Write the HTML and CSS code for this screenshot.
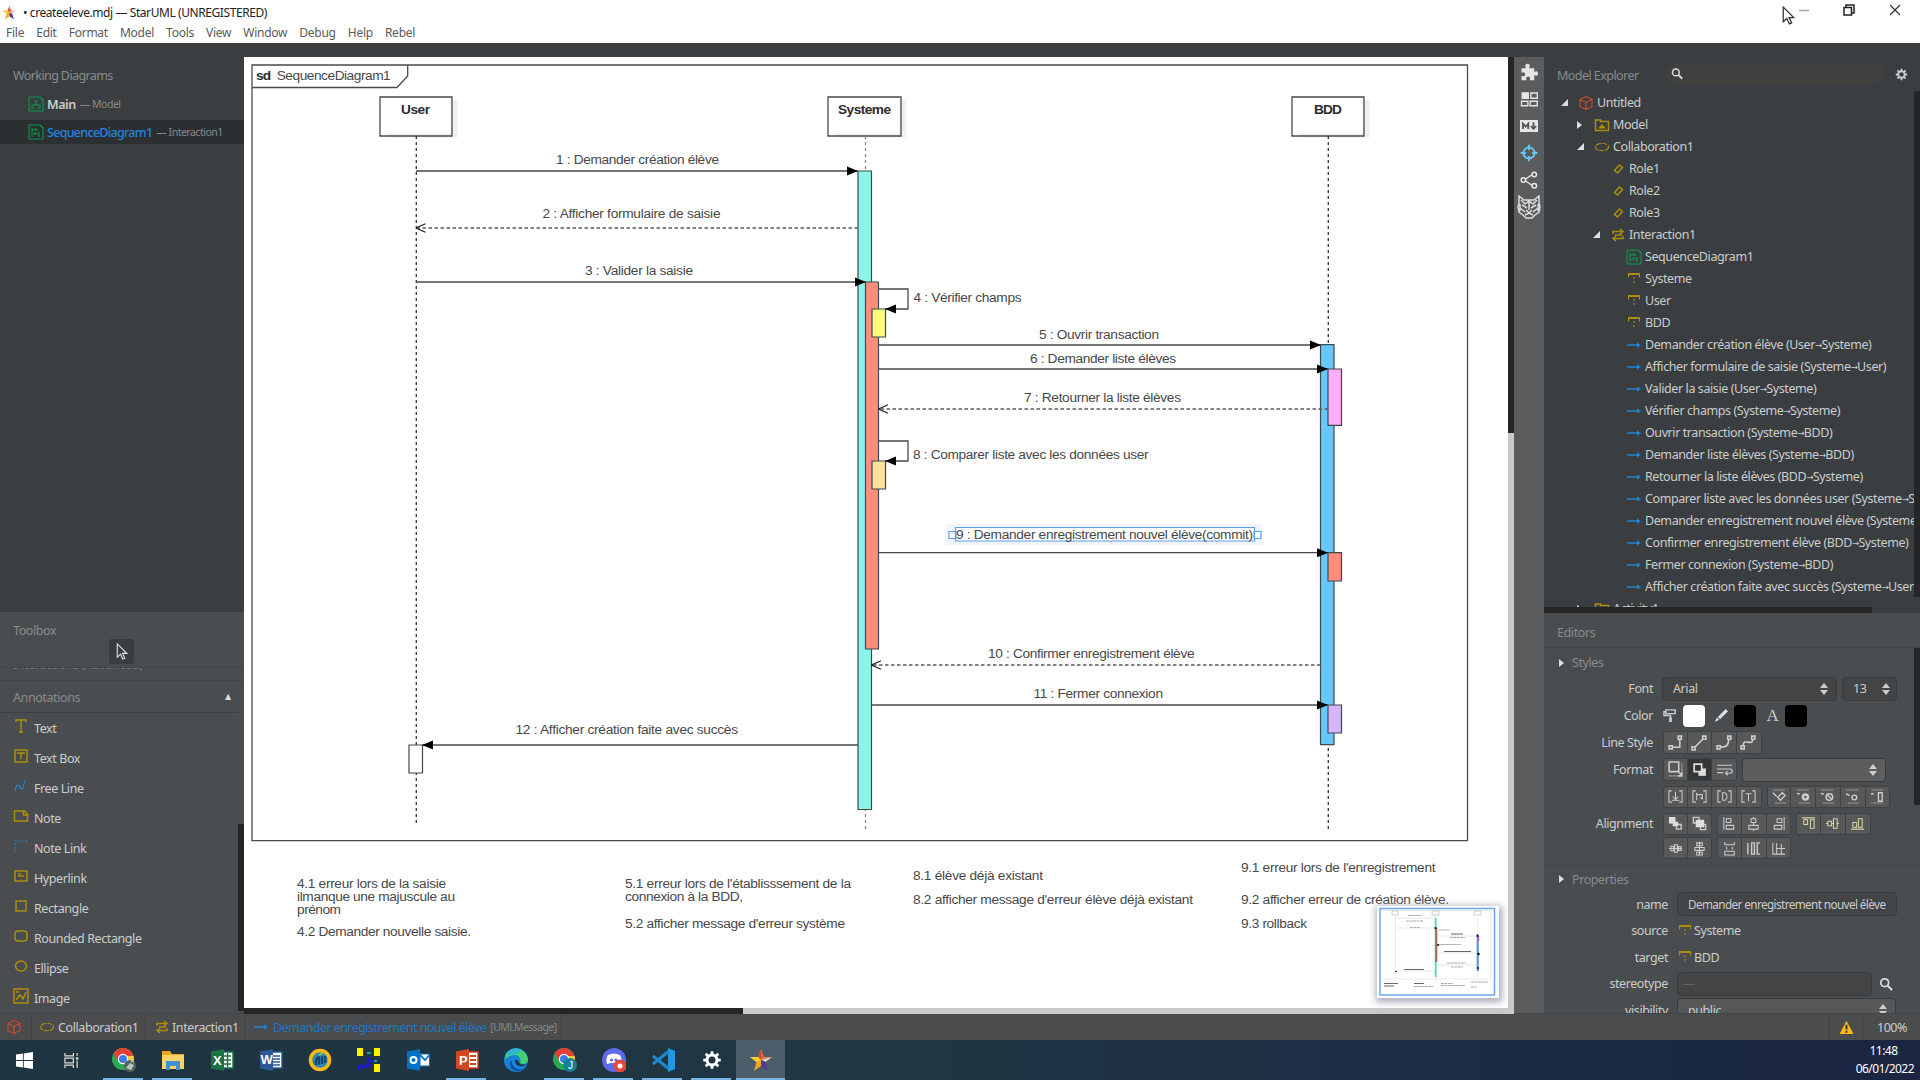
FILE: index.html
```html
<!DOCTYPE html>
<html lang="fr">
<head>
<meta charset="utf-8">
<title>createeleve.mdj — StarUML (UNREGISTERED)</title>
<link rel="stylesheet" href="styles.css">
</head>
<body>
<svg class="defs" aria-hidden="true">
  <symbol id="star" viewBox="0 0 24 24"><path fill="#f5a623" d="M12 1l-3 8H1l6.500 5L5 23l7-5z"/><path fill="#d8432e" d="M12 1v11l-3-3z"/><path fill="#f6d13a" d="M1 9h8l3 3-4.500 2z"/><path fill="#e0604a" d="M12 1l3 8-3 3z"/><path fill="#ee8a3a" d="M15 9h8l-11 3z"/><path fill="#ded6e6" d="M23 9l-6.500 5L12 12z"/><path fill="#5a3a8c" d="M12 12l4.500 2L19 23l-7-5z"/></symbol>
  <symbol id="cube" viewBox="0 0 16 16"><path class="ln" d="M8 1.500l6 3v7l-6 3-6-3v-7zM2 4.500l6 3 6-3M8 7.500v7"/></symbol>
  <symbol id="diagram" viewBox="0 0 16 16"><path class="ln" d="M1 1h11l3 3v11H1z"/><path class="ln" d="M4 11V9h8v2M8 9V6M3 12h3M10 12h3M6 5h4"/></symbol>
  <symbol id="seq" viewBox="0 0 16 16"><path class="ln" d="M1 1h11l3 3v11H1z"/><path class="ln" d="M4 4v9M4 6h5l-2-1.500M11 8v5M11 10H6l2-1.500"/></symbol>
  <symbol id="model" viewBox="0 0 16 16"><path class="ln w" d="M1.500 3h5v1.500h8v9h-13z"/><path d="M4 11.500L8 7l4 4.500z" fill="currentColor"/></symbol>
  <symbol id="collab" viewBox="0 0 16 16"><ellipse class="ln" cx="8" cy="8" rx="6.500" ry="3.700" stroke-dasharray="5 1"/></symbol>
  <symbol id="role" viewBox="0 0 16 16"><path class="ln w" d="M9.500 4l3 2.500-5 5.500-3-2.500z"/></symbol>
  <symbol id="inter" viewBox="0 0 16 16"><path class="ln w" d="M3 7V4.500h9M10 2l3 2.500L10 7M13 9v2.500H4M6 9l-3 2.500L6 14M5 8h7"/></symbol>
  <symbol id="life" viewBox="0 0 16 16"><path class="ln" d="M2.500 6.500V2.500h11v4M2.500 3.500h11"/><path class="ln" d="M8 6v8" stroke-dasharray="2 2"/></symbol>
  <symbol id="arr" viewBox="0 0 16 16"><path class="ln w" d="M1 8h12"/><path d="M11 5.500L15 8l-4 2.500z" fill="currentColor"/></symbol>
  <symbol id="mag" viewBox="0 0 16 16"><circle cx="6.500" cy="6.500" r="4.500" fill="none" stroke="currentColor" stroke-width="2"/><path d="M10 10l5 5" stroke="currentColor" stroke-width="2.400"/></symbol>
  <symbol id="gear" viewBox="0 0 16 16"><circle cx="8" cy="8" r="4" fill="none" stroke="currentColor" stroke-width="2.400"/><path d="M8 1v3M8 12v3M1 8h3M12 8h3M3 3l2 2M11 11l2 2M13 3l-2 2M5 11l-2 2" stroke="currentColor" stroke-width="2.200"/></symbol>
  <symbol id="ud" viewBox="0 0 8 12"><path d="M4 0l4 5H0zM4 12l4-5H0z" fill="currentColor"/></symbol>
  <symbol id="cursor" viewBox="0 0 12 18"><path d="M1 1v14l3.400-3.200L6.800 17l2.200-1-2.400-5H11z" stroke-width="1.200"/></symbol>
  <marker id="solid" viewBox="0 0 11 10" refX="11" refY="5" markerWidth="11" markerHeight="10" markerUnits="userSpaceOnUse" orient="auto"><path d="M0 .5L11 5 0 9.500z"/></marker>
  <marker id="open" viewBox="0 0 11 10" refX="10.500" refY="5" markerWidth="11" markerHeight="10" markerUnits="userSpaceOnUse" orient="auto"><path d="M1 .7L10.500 5 1 9.300" fill="none" stroke="#222" stroke-width="1.200"/></marker>
</svg>

<header class="titlebar">
  <svg class="logo"><use href="#star"/></svg>
  <span class="title">• createeleve.mdj — StarUML (UNREGISTERED)</span>
  <svg class="winctl" viewBox="0 0 140 22"><path d="M19 10.500h10" stroke="#aaa" stroke-width="1.600"/><path d="M64 7.500h7.500V15H64zM66 7V5h8v8h-2" fill="none" stroke="#222" stroke-width="1.500"/><path d="M110 5l10 10M120 5l-10 10" stroke="#333" stroke-width="1.200"/></svg>
  <svg class="pointer" fill="#fff" stroke="#333"><use href="#cursor"/></svg>
</header>
<nav class="menubar"><span>File</span><span>Edit</span><span>Format</span><span>Model</span><span>Tools</span><span>View</span><span>Window</span><span>Debug</span><span>Help</span><span>Rebel</span></nav>

<main class="work">
  <aside class="left">
    <section class="diagrams">
      <h2>Working Diagrams</h2>
      <div class="wd"><svg class="ic green"><use href="#diagram"/></svg><b>Main</b><small>— Model</small></div>
      <div class="wd on"><svg class="ic green"><use href="#seq"/></svg><b>SequenceDiagram1</b><small>— Interaction1</small></div>
    </section>
    <section class="toolbox">
      <div class="tb-head"><h2>Toolbox</h2><div class="sel"><svg fill="none" stroke="#ddd"><use href="#cursor"/></svg></div></div>
      <div class="cut"><span>Interactions (Advanced)</span></div>
      <div class="group"><span>Annotations</span><i>▲</i></div>
      <ul class="tools">
        <li><svg class="ic gold" viewBox="0 0 16 16"><path class="ln w" d="M3 4V2h10v2M8 2v12M6 14h4"/></svg>Text</li>
        <li><svg class="ic gold" viewBox="0 0 16 16"><path class="ln w" d="M2 2h12v12H2zM5 6V5h6v1M8 5v6"/></svg>Text Box</li>
        <li><svg class="ic blue" viewBox="0 0 16 16"><path class="ln" d="M2 13c1-3 1-6 3-6s2 5 4 4 1-7 4-8"/></svg>Free Line</li>
        <li><svg class="ic gold" viewBox="0 0 16 16"><path class="ln w" d="M1.500 3h10l3 3v7h-13zM10.500 3v4h4"/></svg>Note</li>
        <li><svg class="ic blue" viewBox="0 0 16 16"><path class="ln" stroke-dasharray="2 1.500" d="M2 14V3h12"/></svg>Note Link</li>
        <li><svg class="ic gold" viewBox="0 0 16 16"><path class="ln w" d="M2 3h12v10H2zM5 8h6M5 6h3"/></svg>Hyperlink</li>
        <li><svg class="ic gold" viewBox="0 0 16 16"><path class="ln w" d="M3 3h10v10H3z"/></svg>Rectangle</li>
        <li><svg class="ic gold" viewBox="0 0 16 16"><rect class="ln w" x="2" y="3" width="12" height="10" rx="3"/></svg>Rounded Rectangle</li>
        <li><svg class="ic gold" viewBox="0 0 16 16"><ellipse class="ln w" cx="8" cy="8" rx="5.500" ry="5"/></svg>Ellipse</li>
        <li><svg class="ic gold" viewBox="0 0 16 16"><path class="ln w" d="M1 1h14v14H1zM3 12l4-5 3 4 3-7M3 4h3"/></svg>Image</li>
      </ul>
      <div class="thumb-l"></div>
    </section>
  </aside>

  <section class="canvas">
    <svg class="sheet" viewBox="244 57 1264 951">
      <g class="shape">
        <path d="M252 65H1467.500V840.700H252z"/>
        <path d="M252 87.500H397L407.700 76V65"/>
      </g>
      <g class="shadow"><path d="M387 136h69v-35h-4v34h-65zM835 136h70v-35h-4v34h-66zM1299 136h69v-35h-4v34h-65z"/></g>
      <g class="shape"><path d="M380 97h72v39h-72zM828 97h73v39h-73zM1292 97h72v39h-72z"/></g>
      <g class="lifeline"><path d="M416.300 136V823"/><path class="dim" d="M865.500 136V830"/><path d="M1328.300 136V830"/></g>
      <g class="exec">
        <path fill="#8df4ea" d="M858 171h13.500v638.500H858z"/>
        <path fill="#ff8d7c" d="M865.500 282h13v367h-13z"/>
        <path fill="#fffa82" d="M872 309h13.500v28H872z"/>
        <path fill="#ffe2a0" d="M872 461h13.500v28H872z"/>
        <path fill="#66c8ff" d="M1320.500 344.700h13.500v400h-13.500z"/>
        <path fill="#ffaefc" d="M1328 369h13.500v56.300H1328z"/>
        <path fill="#ff8d7c" d="M1328 552.700h13.500V581H1328z"/>
        <path fill="#d8b4ff" d="M1328 705h13.500v28H1328z"/>
        <path fill="#fff" d="M409 745h13.500v28H409z"/>
      </g>
      <g class="msg">
        <path d="M416 171H858"/><path d="M416 282H866"/><path d="M878.500 289H908V309H885"/>
        <path d="M878.500 345H1321"/><path d="M878.500 369H1328"/><path d="M878.500 441H908V461H885"/>
        <path d="M878.500 552.700H1328"/><path d="M871.500 705H1328"/><path d="M858 745H422"/>
      </g>
      <g class="reply"><path d="M858 228H416"/><path d="M1328 409H878.500"/><path d="M1320.500 665H871.500"/></g>
      <path class="halo" d="M946 524h316v21H946z"/>
      <path class="handle" d="M955.500 527.500h299v13.500h-299zM949 531.500h7v7h-7zM1254 531.500h7v7h-7z"/>
      <g class="txt">
        <text class="b" x="256" y="79.700" textLength="15">sd</text><text x="276.700" y="79.700" textLength="114">SequenceDiagram1</text>
        <text class="b" x="401" y="114" textLength="29">User</text><text class="b" x="838" y="114" textLength="53">Systeme</text><text class="b" x="1314" y="114" textLength="28">BDD</text>
        <text x="556" y="164" textLength="163">1 : Demander création élève</text>
        <text x="542.500" y="217.700" textLength="178">2 : Afficher formulaire de saisie</text>
        <text x="585" y="275" textLength="108">3 : Valider la saisie</text>
        <text x="913.500" y="301.700" textLength="108">4 : Vérifier champs</text>
        <text x="1039" y="338.700" textLength="120">5 : Ouvrir transaction</text>
        <text x="1030" y="362.500" textLength="146">6 : Demander liste élèves</text>
        <text x="1024" y="401.700" textLength="157">7 : Retourner la liste élèves</text>
        <text x="913" y="458.500" textLength="235.500">8 : Comparer liste avec les données user</text>
        <text x="956" y="538.500" textLength="297">9 : Demander enregistrement nouvel élève(commit)</text>
        <text x="988" y="658" textLength="206.500">10 : Confirmer enregistrement élève</text>
        <text x="1033.500" y="698.300" textLength="129.500">11 : Fermer connexion</text>
        <text x="515.500" y="734.300" textLength="222.500">12 : Afficher création faite avec succès</text>
        <text x="297" y="888" textLength="149">4.1 erreur lors de la saisie</text>
        <text x="297" y="901" textLength="158">ilmanque une majuscule au</text>
        <text x="297" y="914" textLength="44">prénom</text>
        <text x="297" y="936" textLength="174">4.2 Demander nouvelle saisie.</text>
        <text x="625" y="888" textLength="226">5.1 erreur lors de l'établisssement de la</text>
        <text x="625" y="901" textLength="118">connexion à la BDD,</text>
        <text x="625" y="928" textLength="220">5.2 afficher message d'erreur système</text>
        <text x="913" y="880" textLength="130">8.1 élève déjà existant</text>
        <text x="913" y="904" textLength="280">8.2 afficher message d'erreur élève déjà existant</text>
        <text x="1241" y="872" textLength="194.500">9.1 erreur lors de l'enregistrement</text>
        <text x="1241" y="904" textLength="208">9.2 afficher erreur de création élève.</text>
        <text x="1241" y="928" textLength="66">9.3 rollback</text>
      </g>
    </svg>
    <div class="vscroll"></div>
    <div class="hscroll"></div>
    <svg class="minimap" viewBox="1376 906 122 92">
      <path fill="none" stroke="#6aa6f0" stroke-width="1.500" d="M1379 908.500h114.500V995H1379z"/>
      <path fill="none" stroke="#ddd" d="M1380 910.500h110V979h-110M1394.500 917V979M1434.500 915v65M1476.500 917v60" stroke-width=".6"/>
      <path fill="#fff" stroke="#aaa" stroke-width=".6" d="M1391 911h6v4h-6zM1431 911h7v4h-7zM1473 911h7v4h-7z"/>
      <path stroke="#69d7a9" stroke-width="2" d="M1434.700 918v59"/><path stroke="#a8694e" stroke-width="2" d="M1435.300 928v34"/><path stroke="#528de0" stroke-width="2" d="M1476.700 934v37"/>
      <path stroke="#c35ac8" stroke-width="1.500" d="M1477.500 936v5"/>
      <g stroke="#aaa" stroke-width="1"><path stroke-dasharray="3 .5" d="M1407 915.500h14M1405 921h17M1409 927.500h10M1438 930h11M1449 937.500h15M1438 944.500h22M1446 963h19M1450 967h12M1413 986.500h19M1440 983.500h12M1440 985.500h24M1470 982h17M1470 987h6"/><path stroke="#666" d="M1403 969.500h20M1450 934h12M1443 951.500h27M1383 983.500h14M1383 986h10M1413 983.500h10"/></g>
      <path stroke="#ccc" stroke-width=".5" d="M1394 918h40M1394 928h40M1394 971h40M1436 936h40M1436 953h40M1436 965h40"/>
      <circle cx="1434.500" cy="928" r="1"/><circle cx="1437" cy="945" r="1"/><circle cx="1476.500" cy="936" r="1"/><circle cx="1477.500" cy="954" r="1.200"/><circle cx="1477" cy="968" r="1"/><circle cx="1395" cy="971.500" r=".8"/>
    </svg>
  </section>

  <div class="strip">
    <svg viewBox="0 0 24 24"><path fill="#e6e6e6" d="M2 7h6c-2-3-1-6 2-6s4 3 2 6h7v5c3-2 5-1 5 2s-2 4-5 2v7h-6c1-3 0-5-2-5s-4 2-2 5H2v-6c3 2 5 0 5-2s-2-4-5-2z"/></svg>
    <svg viewBox="0 0 24 24"><path fill="#e6e6e6" d="M2 3h10v9H2z"/><path fill="none" stroke="#e6e6e6" stroke-width="1.800" d="M14.500 4H23v7h-8.500zM2 15h8.500v6H2zM13.500 15H23v6h-9.500z"/></svg>
    <svg viewBox="0 0 24 24"><rect y="4" width="24" height="16" fill="#e6e6e6"/><path fill="none" stroke="#555" stroke-width="2.400" d="M4 16V9l3.500 4L11 9v7M18 7v8M14.500 12l3.500 4 3.500-4"/></svg>
    <svg viewBox="0 0 24 24"><path fill="none" stroke="#6fc5f3" stroke-width="2.400" d="M12 1v7M12 16v7M1 12h7M16 12h7"/><circle cx="12" cy="12" r="7.500" fill="none" stroke="#6fc5f3" stroke-width="2.400"/></svg>
    <svg viewBox="0 0 24 24"><path fill="none" stroke="#e6e6e6" stroke-width="2" d="M7 11l9-6M7 13l9 6"/><g fill="none" stroke="#e6e6e6" stroke-width="2"><circle cx="4.500" cy="12" r="3"/><circle cx="19" cy="4.500" r="3"/><circle cx="19" cy="19.500" r="3"/></g></svg>
    <svg class="big" viewBox="0 0 24 24"><path fill="none" stroke="#dcdcdc" stroke-width="1.500" d="M2 1l5 4h10l5-4v7l1 4-1 5-4 3-3 3H9l-3-3-4-3-1-5 1-4zM4 5l4 4 4-3 4 3 4-4M5 10l5 3M19 10l-5 3M12 6v9M9 15l3 3 3-3M3 13l5 4M21 13l-5 4M8 20l4-2 4 2M3 9v7M21 9v7"/></svg>
  </div>

  <aside class="right">
    <section class="explorer">
      <div class="ex-head"><h2>Model Explorer</h2><div class="search"><svg><use href="#mag"/></svg></div><svg class="cog"><use href="#gear"/></svg></div>
      <ul class="tree">
        <li class="l0"><i class="dn"></i><svg class="ic red"><use href="#cube"/></svg>Untitled</li>
        <li class="l1"><i class="rt"></i><svg class="ic gold"><use href="#model"/></svg>Model</li>
        <li class="l1"><i class="dn"></i><svg class="ic gold"><use href="#collab"/></svg>Collaboration1</li>
        <li class="l2"><i></i><svg class="ic gold"><use href="#role"/></svg>Role1</li>
        <li class="l2"><i></i><svg class="ic gold"><use href="#role"/></svg>Role2</li>
        <li class="l2"><i></i><svg class="ic gold"><use href="#role"/></svg>Role3</li>
        <li class="l2"><i class="dn"></i><svg class="ic gold"><use href="#inter"/></svg>Interaction1</li>
        <li class="l3"><i></i><svg class="ic green"><use href="#seq"/></svg>SequenceDiagram1</li>
        <li class="l3"><i></i><svg class="ic gold"><use href="#life"/></svg>Systeme</li>
        <li class="l3"><i></i><svg class="ic gold"><use href="#life"/></svg>User</li>
        <li class="l3"><i></i><svg class="ic gold"><use href="#life"/></svg>BDD</li>
        <li class="l3"><i></i><svg class="ic blue"><use href="#arr"/></svg>Demander création élève (User<em>→</em>Systeme)</li>
        <li class="l3"><i></i><svg class="ic blue"><use href="#arr"/></svg>Afficher formulaire de saisie (Systeme<em>→</em>User)</li>
        <li class="l3"><i></i><svg class="ic blue"><use href="#arr"/></svg>Valider la saisie (User<em>→</em>Systeme)</li>
        <li class="l3"><i></i><svg class="ic blue"><use href="#arr"/></svg>Vérifier champs (Systeme<em>→</em>Systeme)</li>
        <li class="l3"><i></i><svg class="ic blue"><use href="#arr"/></svg>Ouvrir transaction (Systeme<em>→</em>BDD)</li>
        <li class="l3"><i></i><svg class="ic blue"><use href="#arr"/></svg>Demander liste élèves (Systeme<em>→</em>BDD)</li>
        <li class="l3"><i></i><svg class="ic blue"><use href="#arr"/></svg>Retourner la liste élèves (BDD<em>→</em>Systeme)</li>
        <li class="l3"><i></i><svg class="ic blue"><use href="#arr"/></svg>Comparer liste avec les données user (Systeme<em>→</em>S</li>
        <li class="l3"><i></i><svg class="ic blue"><use href="#arr"/></svg>Demander enregistrement nouvel élève (Systeme</li>
        <li class="l3"><i></i><svg class="ic blue"><use href="#arr"/></svg>Confirmer enregistrement élève (BDD<em>→</em>Systeme)</li>
        <li class="l3"><i></i><svg class="ic blue"><use href="#arr"/></svg>Fermer connexion (Systeme<em>→</em>BDD)</li>
        <li class="l3"><i></i><svg class="ic blue"><use href="#arr"/></svg>Afficher création faite avec succès (Systeme<em>→</em>User)</li>
        <li class="l1"><i class="rt"></i><svg class="ic gold"><use href="#model"/></svg>Activity1</li>
      </ul>
      <div class="thumb-x"></div><div class="thumb-y"></div>
    </section>
    <section class="editors">
      <h2 class="ed-title">Editors</h2>
      <h3><i class="rt"></i>Styles</h3>
      <div class="row"><label>Font</label><div class="box font">Arial<svg><use href="#ud"/></svg></div><div class="box size">13<svg><use href="#ud"/></svg></div></div>
      <div class="row"><label>Color</label>
        <svg class="pt" viewBox="0 0 16 16"><path class="ln w" d="M3 2h10v4H3zM3 4H1v4h7v3"/><path stroke="currentColor" stroke-width="3" d="M8 10v5"/></svg><span class="sw white"></span>
        <svg class="pt" viewBox="0 0 16 16"><path fill="#ddd" d="M1 15l2-5 2.500 2.500zM4 9.500L12.500 1 15 3.500 6.500 12z"/></svg><span class="sw"></span>
        <span class="pt a">A</span><span class="sw"></span></div>
      <div class="row"><label>Line Style</label><div class="btns big">
        <b><svg viewBox="0 0 16 16"><path class="ln w" d="M2 11h3v3H2zM5 12.500h7V4M10.500 2h3v3h-3z"/></svg></b><b><svg viewBox="0 0 16 16"><path class="ln w" d="M1 12h3v3H1zM4 12l8-8M11 2h3v3h-3z"/></svg></b><b><svg viewBox="0 0 16 16"><path class="ln w" d="M1 11h3v3H1zM4 12.500c6 0 8-2 8-8M11 2h3v3h-3z"/></svg></b><b><svg viewBox="0 0 16 16"><path class="ln w" d="M1 11h3v3H1zM3 11c0-8 9 1 9-6M11 2h3v3h-3z"/></svg></b></div></div>
      <div class="row"><label>Format</label><div class="btns big">
        <b><svg viewBox="0 0 16 16"><path class="ln w" d="M2 1h9v9H2zM10 9l4 5M14 10v4h-4"/><path class="ln" stroke-dasharray="1 1" d="M2 14h7M14 2v7"/></svg></b><b class="on"><svg viewBox="0 0 16 16"><path fill="#ddd" d="M7 7h7v7H7z"/><path fill="#333" stroke="#ddd" stroke-width="1.600" d="M3 3h7v7H3z"/></svg></b><b><svg viewBox="0 0 16 16"><path class="ln" d="M1 4h14M1 7.500h12c3 0 3 4 0 4h-3M1 11h6M11 9.500l-2 2 2 2"/></svg></b></div><div class="box combo"><svg><use href="#ud"/></svg></div></div>
      <div class="row"><label></label><div class="btns">
        <b><svg viewBox="0 0 16 16"><path class="ln" d="M4 2H1v12h3M12 2h3v12h-3M8 3v8M5 8l3 3 3-3M4 12h8"/></svg></b><b><svg viewBox="0 0 16 16"><path class="ln" d="M4 2H1v12h3M12 2h3v12h-3M5 6h6v5M5 4v8M9 9l2 2"/></svg></b><b><svg viewBox="0 0 16 16"><path class="ln" d="M4 2H1v12h3M12 2h3v12h-3M6 4h2.500l2 2v4l-2 2H6z"/></svg></b><b><svg viewBox="0 0 16 16"><path class="ln" d="M4 2H1v12h3M12 2h3v12h-3M5 5h6M8 5v8"/></svg></b></div>
        <div class="btns">
        <b><svg viewBox="0 0 16 16"><path class="ln dim" d="M1 1h13M3 15h12"/><path class="ln w" d="M11 4l3 3-5 5-3-3zM1 4l4 4"/></svg></b><b><svg viewBox="0 0 16 16"><path class="ln dim" d="M1 1h13M3 15h12"/><path class="ln w" d="M1 5h3"/><circle cx="10" cy="8.500" r="2.700" fill="none" stroke="currentColor" stroke-width="2.600"/></svg></b><b><svg viewBox="0 0 16 16"><path class="ln dim" d="M1 1h13M3 15h12"/><path class="ln w" d="M1 5h3M7 6l6 5"/><circle class="ln w" cx="10" cy="8.500" r="3.500"/></svg></b><b><svg viewBox="0 0 16 16"><path class="ln dim" d="M1 1h13M3 15h12"/><path class="ln w" d="M1 5l4 2"/><circle class="ln w" cx="10" cy="9" r="2.500"/></svg></b><b><svg viewBox="0 0 16 16"><path class="ln dim" d="M1 1h13M1 15h13"/><path class="ln w" d="M1 5h3M9 4h4v9H9z"/></svg></b></div></div>
      <div class="row"><label>Alignment</label><div class="btns">
        <b><svg viewBox="0 0 16 16"><path class="ln w" d="M9 9h5v5H9z"/><path fill="#ddd" d="M1 1h7v7H1zM5 6h6v5H5z"/></svg></b><b><svg viewBox="0 0 16 16"><path class="ln w" d="M1.500 1.500h6v6h-6zM9 9h5.500v5.500H9z"/><path fill="#ddd" d="M4 4h9v8H4z"/></svg></b></div><div class="btns">
        <b><svg viewBox="0 0 16 16"><path class="ln" d="M2 1v14M4.500 3h5v4h-5zM4.500 10h8v4h-8z"/></svg></b><b><svg viewBox="0 0 16 16"><path class="ln" d="M8 1v2M8 7v3M8 14v2M5.500 3h5v4h-5zM3 10h10v4H3z"/></svg></b><b><svg viewBox="0 0 16 16"><path class="ln" d="M14 1v14M6.500 3h5v4h-5zM3.500 10h8v4h-8z"/></svg></b></div><div class="btns warm">
        <b><svg viewBox="0 0 16 16"><path class="ln" d="M1 2h14M3 4h4v5H3zM10 4h4v9h-4z"/></svg></b><b><svg viewBox="0 0 16 16"><path class="ln" d="M1 8h2M7 8h2M13 8h2M3 5.500h4v5H3zM9 3h4v10H9z"/></svg></b><b><svg viewBox="0 0 16 16"><path class="ln" d="M1 14h14M3 7h4v5H3zM9 3h4v9H9z"/></svg></b></div></div>
      <div class="row last"><label></label><div class="btns">
        <b><svg viewBox="0 0 16 16"><path class="ln" d="M1 8h14M3 5.500h3v5H3zM7 4h3v8H7zM11 6h3v4h-3z"/></svg></b><b><svg viewBox="0 0 16 16"><path class="ln" d="M8 1v14M5 2h6v3H5zM3 7h10v3H3zM5 12h6v3H5z"/></svg></b></div><div class="btns">
        <b><svg viewBox="0 0 16 16"><path class="ln" d="M3 1v3h10V1M3 11h10v4H3zM5 6v3M11 6v3"/></svg></b><b><svg viewBox="0 0 16 16"><path class="ln w" d="M2 2v12M6 2v12h3V2zM15 2h-3v12h3"/></svg></b><b><svg viewBox="0 0 16 16"><path class="ln" d="M2 2v12h13M6 2v12M11 3v11M6 8h9"/></svg></b></div></div>
      <h3 class="props"><i class="rt"></i>Properties</h3>
      <div class="row p"><label>name</label><div class="box name">Demander enregistrement nouvel élève</div></div>
      <div class="row p"><label>source</label><svg class="ic gold"><use href="#life"/></svg>Systeme</div>
      <div class="row p"><label>target</label><svg class="ic gold"><use href="#life"/></svg>BDD</div>
      <div class="row p"><label>stereotype</label><div class="box stereo">—</div><svg class="find"><use href="#mag"/></svg></div>
      <div class="row p"><label>visibility</label><div class="box vis">public<svg><use href="#ud"/></svg></div></div>
      <div class="thumb-y"></div>
    </section>
  </aside>
</main>

<footer class="status">
  <div class="s1"><svg class="ic red"><use href="#cube"/></svg></div>
  <div class="s2"><svg class="ic gold"><use href="#collab"/></svg>Collaboration1</div>
  <div class="s3"><svg class="ic gold"><use href="#inter"/></svg>Interaction1</div>
  <div class="s4"><svg class="ic blue"><use href="#arr"/></svg><span>Demander enregistrement nouvel élève</span><small>[UMLMessage]</small></div>
  <div class="s5"></div>
  <div class="s6"><svg viewBox="0 0 16 16"><path fill="#fbb61b" d="M8 1l7.500 14H.5z"/><path stroke="#333" stroke-width="2" d="M8 5v5M8 11.500v2"/></svg></div>
  <div class="s7">100%</div>
</footer>

<footer class="taskbar">
  <div class="tk start"><svg viewBox="0 0 16 16"><path fill="#fff" d="M0 2.300l6.500-.9v6.100H0zM7.300 1.300L16 0v7.500H7.300zM0 8.400h6.500v6.200L0 13.700zM7.300 8.400H16V16l-8.700-1.300z"/></svg></div>
  <div class="tk view"><svg viewBox="0 0 16 16"><path fill="none" stroke="#ddd" stroke-width="1.300" d="M1 0v3h9V0M1 5.500h9v5H1zM1 16v-3h9v3M14 0v3M14 8v8"/><path fill="#ddd" d="M12.700 4.500h2.600v2.500h-2.600z"/></svg></div>
  <div class="tk run"><svg viewBox="0 0 24 24"><circle cx="11" cy="11" r="11" fill="#2da94f"/><path fill="#e24234" d="M1.500 5.500a11 11 0 0119 0L21.500 8H11l-5 5z"/><path fill="#fcc934" d="M21.500 8a11 11 0 01-9 14l4-9-3-5z"/><circle cx="11" cy="11" r="5.200" fill="#fff"/><circle cx="11" cy="11" r="4" fill="#3b7de8"/><circle cx="18" cy="18" r="6" fill="#56655f"/><path fill="#b7c9c0" d="M14 20l4-5 4 2-3 5zM18 13l3-1 1 3z"/></svg></div>
  <div class="tk run"><svg viewBox="0 0 24 24"><path fill="#e8a91e" d="M1 3h8l2 3h12v5H1z"/><path fill="#fbd36b" d="M1 7h22v14H1z"/><path fill="#3d93d6" d="M5 22v-9h14v9h-4v-4H9v4z"/></svg></div>
  <div class="tk"><svg viewBox="0 0 24 24"><path fill="#fff" stroke="#1e7145" stroke-width="1.500" d="M12 4h11v16H12z"/><path stroke="#1e7145" stroke-width="1.500" d="M14 8h7M14 12h7M14 16h7M17.500 5v14"/><path fill="#1e7145" d="M1 3.500L14 1v22L1 20.500z"/><text class="gl" x="3" y="16.500">X</text></svg></div>
  <div class="tk"><svg viewBox="0 0 24 24"><path fill="#fff" stroke="#2b579a" stroke-width="1.500" d="M12 4h11v16H12z"/><path stroke="#2b579a" stroke-width="1.500" d="M14 8h7M14 11h7M14 14h7M14 17h7"/><path fill="#2b579a" d="M1 3.500L14 1v22L1 20.500z"/><text class="gl" x="1.500" y="16" textLength="12">W</text></svg></div>
  <div class="tk"><svg viewBox="0 0 24 24"><circle cx="12" cy="12" r="9.500" fill="#2d88b8" stroke="#fdb913" stroke-width="3.500"/><path fill="none" stroke="#124a72" stroke-width="2.200" d="M8 17c-1-4 1-8 3-8v8M14 8v8M17 8v7"/><path stroke="#7bc043" stroke-width="2" d="M11 7l4-2"/></svg></div>
  <div class="tk"><svg viewBox="0 0 24 24"><path fill="#ffef00" d="M0 0h6v8H0zM17 0h6v8h-6zM17 16h6v8h-6z"/><path fill="none" stroke="#1818e0" stroke-width="2" d="M2 23v-5h5M4 20l8-3 2 2M9 17l4-4-2-4M13 13h3"/><path fill="#16a0a0" d="M10 4h4v2h-4zM17 12h3v2h-3z"/></svg></div>
  <div class="tk"><svg viewBox="0 0 24 24"><path fill="#0072c6" d="M1 3.500L14 1v22L1 20.500z"/><path fill="#fff" stroke="#0072c6" d="M14 6h9.500v12H14z"/><path fill="none" stroke="#0072c6" stroke-width="1.800" d="M14 7l5 5 4.500-5"/><circle cx="7.500" cy="12" r="3" fill="none" stroke="#fff" stroke-width="2"/></svg></div>
  <div class="tk run"><svg viewBox="0 0 24 24"><path fill="#fff" stroke="#d24726" stroke-width="1.500" d="M12 4h11v16H12z"/><path stroke="#d24726" stroke-width="2" d="M15 8h6M15 12h6M15 16h6"/><path fill="#d24726" d="M1 3.500L14 1v22L1 20.500z"/><text class="gl" x="4" y="16.500">P</text></svg></div>
  <div class="tk"><svg viewBox="0 0 24 24"><circle cx="12" cy="12" r="12" fill="#1583d8"/><path fill="#45cf74" d="M2 6a12 12 0 0122 6c0 4-5 5-8 3 2-5-2-8-6-8-3 0-6 1-9 5z"/><path fill="#2bb6d6" d="M2 6a12 12 0 0116-4L8 8z"/><path fill="#0d4c9e" d="M8 12c-1 6 4 11 11 9-8 6-17-3-11-9z"/><path fill="#203642" d="M11 12a3 3 0 014 3c3 2 6 2 9 0-5 6-14 3-13-3z"/></svg></div>
  <div class="tk run"><svg viewBox="0 0 24 24"><circle cx="11" cy="11" r="11" fill="#2da94f"/><path fill="#e24234" d="M1.500 5.500a11 11 0 0119 0L21.500 8H11l-5 5z"/><path fill="#fcc934" d="M21.500 8a11 11 0 01-9 14l4-9-3-5z"/><circle cx="11" cy="11" r="5.200" fill="#fff"/><circle cx="11" cy="11" r="4" fill="#3b7de8"/><circle cx="17" cy="17" r="7" fill="#128495"/><text x="15" y="20.500" class="gl s">J</text></svg></div>
  <div class="tk run"><svg viewBox="0 0 24 24"><circle cx="12" cy="12" r="12" fill="#5b6bea"/><path fill="#fff" d="M6 7c4-2 8-2 12 0 2 4 2 7 1 9l-4-1H9l-4 1c-1-3-1-6 1-9z"/><circle cx="9.500" cy="12" r="1.600" fill="#5b6bea"/><circle cx="14" cy="12" r="1.600" fill="#5b6bea"/><circle cx="18" cy="18" r="6.500" fill="#e4493c"/><circle cx="18" cy="18" r="2.500" fill="#fff"/></svg></div>
  <div class="tk run"><svg viewBox="0 0 24 24"><path fill="#2596e0" d="M17 0l7 3v18l-7 3z"/><path fill="none" stroke="#1f86d2" stroke-width="3" d="M18 3L2 16M2 8l16 13"/></svg></div>
  <div class="tk run gearw"><svg><use href="#gear"/></svg></div>
  <div class="tk run act"><svg><use href="#star"/></svg></div>
  <div class="clock"><span>11:48</span><span>06/01/2022</span></div>
</footer>
</body>
</html>
```
FILE: styles.css
```css
* { box-sizing: border-box; }
body { margin: 0; width: 1920px; height: 1080px; overflow: hidden; display: flex; flex-direction: column; font: 12.500px "Noto Sans", sans-serif; letter-spacing: -.41px; color: #cbcdcd; background: #3a3e40; }
ul, h2, h3 { margin: 0; padding: 0; list-style: none; font-weight: 400; font-size: inherit; }
svg { display: block; flex: none; }
i, em { font-style: normal; }
.defs { position: absolute; width: 0; height: 0; }
.ln { fill: none; stroke: currentColor; stroke-width: 1.100; }
.ln.w { stroke-width: 1.500; }
.ln.dim { opacity: .5; }
.ic { width: 16px; height: 16px; }
.gold { color: #ae8d0c; }
.green { color: #089a4c; }
.blue { color: #1c86d8; }
.red { color: #d1492e; }

.titlebar { position: relative; height: 22px; background: #fff; display: flex; align-items: center; padding: 2px 0 0 2px; color: #222; }
.logo { width: 15px; height: 15px; }
.title { font-size: 12px; margin-left: 6px; letter-spacing: -.42px; white-space: nowrap; }
.winctl { width: 140px; height: 22px; margin: -2px 0 0 auto; }
.pointer { position: absolute; left: 1782px; top: 6px; width: 13px; height: 19px; z-index: 2; }
.menubar { height: 21px; flex: none; background: #fff; color: #5a5a5a; display: flex; padding-left: 6px; gap: 12px; font-size: 12px; line-height: 22px; letter-spacing: -.25px; }

.work { height: 970px; flex: none; display: flex; }
.left { width: 244px; display: flex; flex-direction: column; }
.diagrams { height: 571px; padding-top: 23px; }
.left h2, .ex-head h2, .ed-title, h3, .group { color: #888b8c; }
.diagrams h2 { height: 27px; padding-left: 13px; line-height: 19px; letter-spacing: -.6px; }
.wd { height: 24px; display: flex; align-items: center; padding-left: 28px; white-space: nowrap; margin-bottom: 4px; margin-top: -1px; }
.wd.on { background: #2c2f31; margin-top: 4px; }
.wd.on b { color: #2283dc; font-weight: 500; letter-spacing: -.7px; }
.wd b { margin-left: 3px; font-weight: 600; }
.wd small { font-size: 10.500px; color: #858889; margin-left: 4px; letter-spacing: -.5px; }
.toolbox { position: relative; flex: 1; background: #4a4d4f; }
.tb-head { height: 56px; border-bottom: 1px solid #424547; }
.tb-head h2 { padding: 9px 0 0 13px; line-height: 20px; }
.sel { width: 25px; height: 25px; margin: -2px 0 0 109px; background: #3a3d3f; border-radius: 3px; display: grid; place-items: center; }
.sel svg { width: 12px; height: 17px; }
.cut { height: 13px; overflow: hidden; padding-left: 13px; color: #75787a; border-bottom: 1px solid #434648; }
.cut span { display: block; margin-top: -11px; line-height: 16px; }
.group { height: 32px; display: flex; justify-content: space-between; align-items: center; padding: 1px 5px 0 13px; border-bottom: 1px solid #3e4143; margin-right: 6px; }
.group i { color: #ddd; font-size: 8px; font-family: "DejaVu Sans", sans-serif; margin-top: -2px; width: 8px; }
.tools li { height: 30px; display: flex; align-items: center; padding: 1px 0 0 13px; gap: 5px; }
.tools svg { margin-top: -5px; }
.thumb-l { position: absolute; right: 0; top: 212px; width: 6px; height: 187px; background: #242527; }

.canvas { width: 1270px; height: 957px; margin-top: 14px; position: relative; display: grid; grid-template: 951px 6px / 1264px 6px; }
.sheet { width: 1264px; height: 951px; background: #fff; letter-spacing: 0; }
.vscroll { background: linear-gradient(#242628 376px, #c9c9c9 376px); }
.hscroll { grid-column: 1 / 3; background: linear-gradient(90deg, #242527 499px, #c9c9cb 499px); }
.shape path { fill: none; stroke: #4a4a4a; stroke-width: 1.300; }
.shadow { fill: #f0f0f3; stroke: #f0f0f3; stroke-width: 3; }
.lifeline path { stroke: #333; stroke-width: 1.300; stroke-dasharray: 3 3; }
.lifeline .dim { stroke: #888; }
.exec path { stroke: #3c4a4c; stroke-width: 1.200; }
.msg path { fill: none; stroke: #4a4a4a; stroke-width: 1.300; marker-end: url(#solid); }
.reply path { fill: none; stroke: #5a5a5a; stroke-width: 1.300; stroke-dasharray: 3.500 2.500; marker-end: url(#open); }
.halo { fill: #e9f1fc; opacity: .7; }
.handle { fill: #fff; stroke: #5e9df0; stroke-width: 1.200; }
.txt { font: 13.700px "Liberation Sans", Arial, sans-serif; fill: #484848; }
.txt .b { font-weight: 700; fill: #2c2c2c; }
.minimap { position: absolute; left: 1133px; top: 849px; width: 122px; height: 92px; background: #fff; box-shadow: 1px 2px 7px 2px #aaa9b5; }

.strip { width: 30px; margin-top: 14px; background: #5a5c5e; display: flex; flex-direction: column; align-items: center; padding-top: 6px; gap: 9px; }
.strip svg { width: 18px; height: 18px; }
.strip .big { width: 24px; height: 24px; margin-top: -3px; }

.right { width: 376px; display: flex; flex-direction: column; }
.explorer { height: 570px; position: relative; overflow: hidden; }
.ex-head { display: flex; align-items: center; height: 48px; padding: 14px 0 0 13px; }
.ex-head h2 { width: 109px; white-space: nowrap; padding-top: 2px; letter-spacing: -.55px; }
.search { width: 218px; height: 22px; border-radius: 11px; background: #40403f; padding: 4px 0 0 5px; color: #ddd; }
.search svg { width: 12px; height: 13px; }
.cog { width: 13px; height: 13px; margin-left: 11px; color: #ccc; }
.tree { width: 370px; height: 516px; overflow: hidden; padding-top: .5px; }
.tree li { height: 22px; display: flex; align-items: center; white-space: nowrap; }
.tree i { width: 8px; margin-right: 9px; flex: none; display: flex; }
.tree .ic { margin-right: 3px; }
.tree em { font: 8.500px "DejaVu Sans", sans-serif; letter-spacing: 0; margin: 1px -.6px 0 0; }
.dn::before { content: ""; border: solid transparent; border-width: 0 0 7px 7px; border-bottom-color: #ddd; }
.rt::before { content: ""; border: solid transparent; border-width: 4px 0 4px 5px; border-left-color: #ddd; }
.l0 { padding-left: 17px; } .l1 { padding-left: 33px; } .l2 { padding-left: 49px; } .l3 { padding-left: 65px; }
.thumb-x { position: absolute; left: 0; bottom: 0; width: 328px; height: 6px; background: #242527; }
.thumb-y { position: absolute; right: 0; top: 48px; width: 6px; height: 506px; background: #252628; }
.editors { height: 400px; background: #4a4d4f; position: relative; overflow: hidden; }
.editors .thumb-y { top: 35px; height: 157px; }
.ed-title { height: 35px; padding: 2px 0 0 13px; line-height: 35px; border-bottom: 1px solid #434648; }
h3 { height: 27px; display: flex; align-items: center; padding: 2px 0 0 15px; }
h3 i { width: 13px; display: flex; }
h3.props { height: 26px; margin-top: 6px; border-top: 1px solid #434648; padding-top: 1px; }
.row { height: 27px; display: flex; align-items: center; }
.row.last { height: 22px; }
.row label { width: 109px; margin-right: 10px; text-align: right; flex: none; }
.row.p { height: 26.500px; }
.row.p label { width: 124px; margin-right: 9px; }
.row.p .ic { margin: 0 1px 0 0; }
.box { height: 24px; background: #424446; border: 1px solid #393c3e; border-radius: 4px; display: flex; align-items: center; justify-content: space-between; padding: 0 8px 0 10px; white-space: nowrap; }
.box svg { width: 8px; height: 12px; }
.font { width: 175px; margin: 0 5px 0 -1px; }
.size { width: 55px; padding-right: 6px; }
.combo { width: 144px; background: #5b5d5f; justify-content: flex-end; }
.name { width: 220px; font-size: 11.700px; letter-spacing: -.58px; padding-right: 0; }
.stereo { width: 195px; padding-left: 5px; color: #666; }
.vis { width: 219px; background: #555759; }
.find { width: 14px; height: 14px; margin-left: 7px; color: #ddd; }
.pt { width: 15px; height: 15px; margin-right: 5px; }
.a { font: 17px/15px "Liberation Serif", serif; text-align: center; }
.sw { width: 22px; height: 22px; background: #000; border-radius: 4px; margin-right: 9px; }
.sw.white { background: #fff; }
.btns { display: flex; margin-right: 5px; }
.btns b { width: 24.700px; height: 22px; background: #56585a; border: 1px solid #3f4244; border-left-width: 0; display: grid; place-items: center; }
.btns b:first-child { border-left-width: 1px; border-radius: 3px 0 0 3px; }
.btns b:last-child { border-radius: 0 3px 3px 0; }
.btns b.on { background: #343638; }
.btns svg { width: 15px; height: 15px; }
.btns.big b { height: 23px; }
.btns.big svg { width: 17px; height: 17px; }
.warm { color: #d9d3a4; }

.status { height: 27px; flex: none; background: #4a4c4e; border-top: 1px solid #424547; display: flex; }
.status div { display: flex; align-items: center; border-right: 1px solid #3f4244; white-space: nowrap; }
.s1 { width: 32px; padding-left: 6px; }
.s2 { width: 114px; padding-left: 7px; gap: 3px; }
.s3 { width: 99px; padding-left: 8px; gap: 2px; }
.s4 { width: 317px; padding-left: 8px; gap: 4px; }
.s4 span { color: #1c76c0; letter-spacing: -.56px; }
.s4 small { font-size: 10.500px; color: #85888a; letter-spacing: -.6px; }
.status .s5 { flex: 1; }
.s6 { width: 33px; justify-content: center; }
.s6 svg { width: 15px; height: 15px; }
.status .s7 { width: 57px; padding-left: 14px; border: 0; letter-spacing: -.5px; }

.taskbar { height: 40px; flex: none; display: flex; background: linear-gradient(90deg, #1e3440 0, #203743 45%, #1b2c44 75%, #1b2542); letter-spacing: 0; }
.tk { width: 49px; height: 40px; flex: none; display: grid; place-items: center; position: relative; }
.tk svg { width: 24px; height: 24px; }
.tk.start { width: 48px; }
.tk.start svg { width: 17px; height: 17px; }
.tk.view { width: 51px; padding-right: 4px; }
.tk.view svg { width: 17px; height: 15px; }
.tk.gearw svg { width: 20px; height: 20px; color: #fff; }
.run::after { content: ""; position: absolute; left: 4px; right: 5px; bottom: 0; height: 2px; background: #76b4e6; }
.act { background: #4b5e69; }
.act::after { left: 0; right: 0; }
.gl { font: 700 13px "Liberation Sans", sans-serif; fill: #fff; }
.gl.s { font-size: 10px; font-weight: 400; }
.clock { margin-left: auto; width: 70px; padding-right: 6px; display: flex; flex-direction: column; align-items: center; justify-content: center; font-size: 12px; line-height: 18px; letter-spacing: -.55px; color: #fff; white-space: nowrap; }
.clock span:last-child { align-self: flex-end; }
.clock span:first-child { margin-left: 3px; }
```
